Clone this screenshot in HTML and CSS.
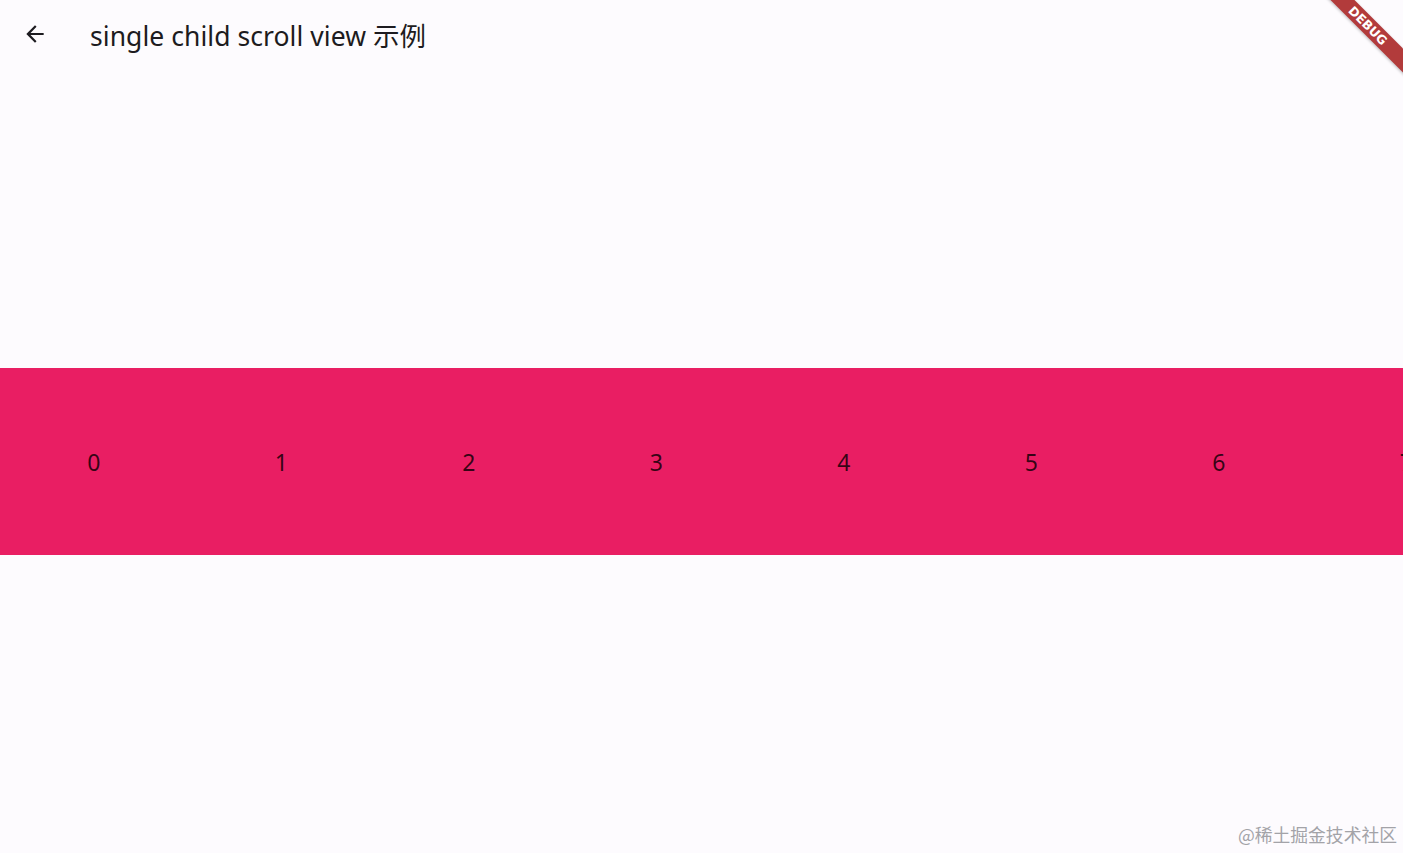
FILE: index.html
```html
<!DOCTYPE html>
<html lang="zh">
<head>
<meta charset="utf-8">
<title>single child scroll view 示例</title>
<link rel="stylesheet" href="styles.css">
</head>
<body>
<div class="app">
  <header class="appbar">
    <button class="back" aria-label="back">
      <svg viewBox="0 0 24 24" width="26" height="26"><path d="M20 11H7.83l5.59-5.59L12 4l-8 8 8 8 1.41-1.41L7.83 13H20v-2z" fill="#1d1b20"/></svg>
    </button>
    <h1 class="title">single child scroll view 示例</h1>
  </header>
  <main class="body">
    <div class="band">
      <div class="cell">0</div>
      <div class="cell">1</div>
      <div class="cell">2</div>
      <div class="cell">3</div>
      <div class="cell">4</div>
      <div class="cell">5</div>
      <div class="cell">6</div>
      <div class="cell">7</div>
      <div class="cell">8</div>
    </div>
  </main>
  <div class="debug">DEBUG</div>
  <div class="watermark">@稀土掘金技术社区</div>
</div>
</body>
</html>
```
FILE: styles.css
```css
html, body {
  margin: 0;
  padding: 0;
  width: 1403px;
  height: 853px;
  overflow: hidden;
  background: #fdfbfe;
}
.app {
  position: relative;
  width: 1403px;
  height: 853px;
  display: flex;
  flex-direction: column;
  font-family: "Noto Sans", "Noto Sans CJK SC", sans-serif;
  color: #1d1b20;
  overflow: hidden;
}
.appbar {
  height: 70px;
  display: flex;
  align-items: center;
  flex-shrink: 0;
}
.back {
  width: 70px;
  height: 70px;
  border: none;
  background: none;
  padding: 0 0 0 22px;
  display: flex;
  align-items: center;
  margin-top: -2px;
}
.title {
  margin: -1px 0 0 20px;
  font-weight: 400;
  font-size: 26.5px;
  letter-spacing: 0.05px;
  color: #1d1b20;
}
.body {
  flex: 1;
  display: flex;
  align-items: center;
}
.band {
  width: 100%;
  height: 187px;
  background: #e91e63;
  display: flex;
  overflow: hidden;
}
.cell {
  flex: 0 0 187.5px;
  display: flex;
  align-items: center;
  justify-content: center;
  font-size: 23px;
  color: rgba(20, 0, 8, 0.85);
}
.debug {
  position: absolute;
  top: 17px;
  right: -30px;
  width: 130px;
  height: 17px;
  line-height: 17px;
  transform: rotate(45deg);
  background: #b23b3b;
  color: #fff;
  font-family: "DejaVu Sans", sans-serif;
  font-weight: 700;
  font-size: 12.5px;
  text-align: center;
  box-shadow: 0 1px 3px rgba(0,0,0,0.25);
}
.watermark {
  position: absolute;
  right: 6px;
  bottom: 6px;
  font-family: "Noto Sans CJK SC", sans-serif;
  font-size: 17.8px;
  color: #a3a3a8;
}
```
